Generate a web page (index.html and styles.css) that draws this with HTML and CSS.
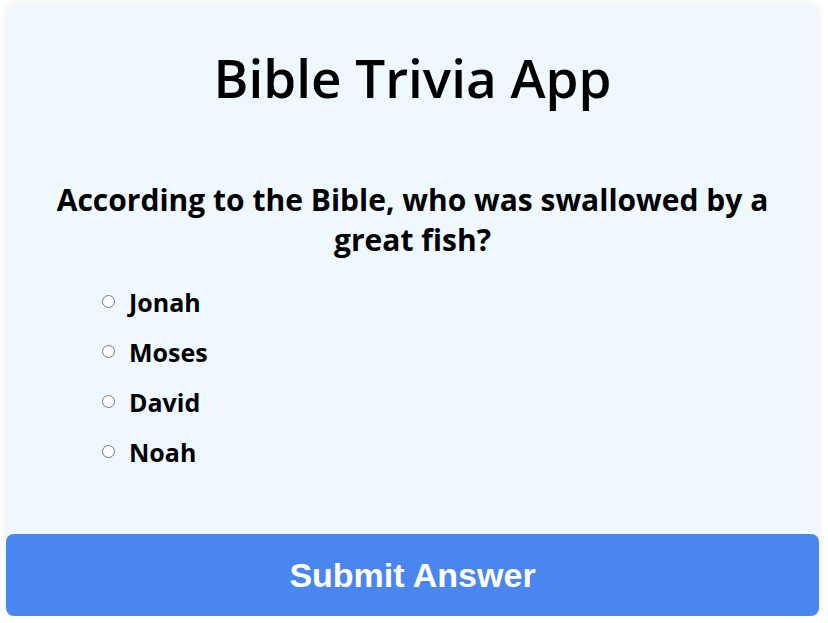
FILE: index.html
```html
<!DOCTYPE html>
<html lang="en">
<head>
<meta charset="utf-8">
<title>Bible Trivia App</title>
<link rel="stylesheet" href="styles.css">
</head>
<body>
<div class="card">
  <h1 class="title">Bible Trivia App</h1>
  <h2 class="question">According to the Bible, who was swallowed by a great fish?</h2>
  <div class="options">
    <label class="option"><input type="radio" name="answer" value="Jonah"><span>Jonah</span></label>
    <label class="option"><input type="radio" name="answer" value="Moses"><span>Moses</span></label>
    <label class="option"><input type="radio" name="answer" value="David"><span>David</span></label>
    <label class="option"><input type="radio" name="answer" value="Noah"><span>Noah</span></label>
  </div>
  <button class="submit" type="button">Submit Answer</button>
</div>
</body>
</html>
```

FILE: styles.css
```css
html, body {
  margin: 0;
  background: #ffffff;
}
body {
  padding: 3px 9px 0 6px;
  font-family: "Open Sans", "Noto Sans", sans-serif;
  color: #000;
}
.card {
  background: #eff7ff;
  border-radius: 12px;
  box-shadow: 0 0 8px rgba(0, 0, 0, 0.08);
  padding: 0;
  display: flex;
  flex-direction: column;
}
.title {
  margin: 43px 0 0;
  font-size: 53px;
  line-height: 1.2;
  font-weight: 600;
  text-align: center;
}
.question {
  margin: 70px 0 0;
  padding: 0 20px;
  font-size: 30px;
  line-height: 40px;
  font-weight: 700;
  text-align: center;
}
.options {
  margin-top: 17px;
  padding-left: 91px;
  display: flex;
  flex-direction: column;
}
.option {
  height: 50px;
  display: flex;
  align-items: center;
  font-size: 25px;
  font-weight: 700;
}
.option input {
  margin: 0 14px 0 5px;
  width: 13px;
  height: 13px;
}
.submit {
  margin-top: 57px;
  height: 82px;
  padding-top: 2px;
  border: none;
  border-radius: 8px;
  background: #4a86ef;
  color: #fff;
  font-family: "Liberation Sans", Arial, sans-serif;
  font-weight: 700;
  font-size: 34px;
}
```
